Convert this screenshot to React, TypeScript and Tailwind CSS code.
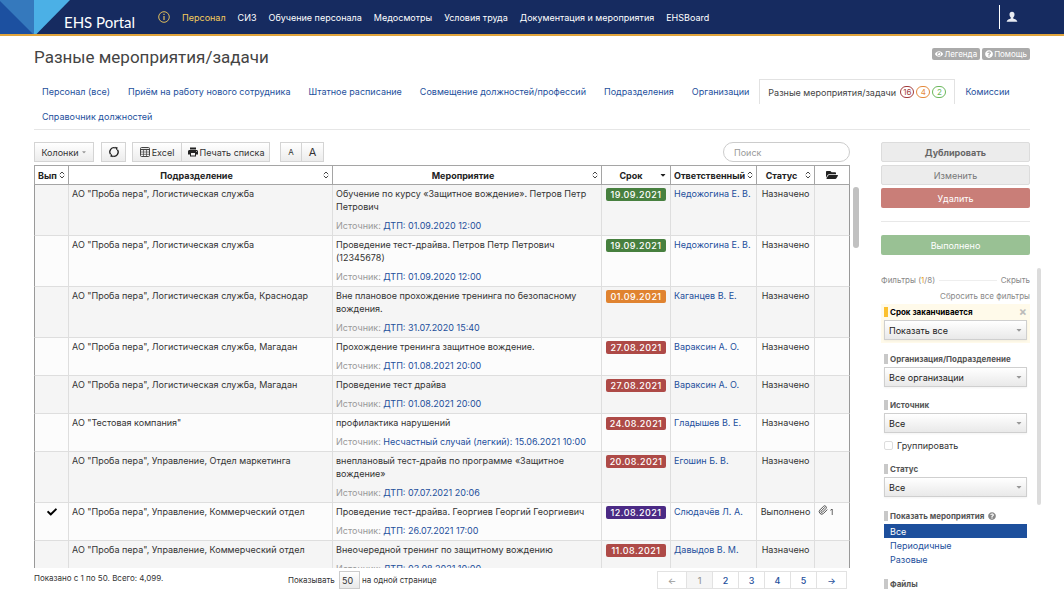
import type { ReactNode } from 'react';
import { Paperclip } from 'lucide-react';
import { FaCheck, FaEye, FaFolderOpen, FaQuestionCircle, FaCaretDown } from 'react-icons/fa';
import { MdPrint } from 'react-icons/md';

const NAV = ['СИЗ', 'Обучение персонала', 'Медосмотры', 'Условия труда', 'Документация и мероприятия', 'EHSBoard'];

const TABS_BEFORE = [
  'Персонал (все)',
  'Приём на работу нового сотрудника',
  'Штатное расписание',
  'Совмещение должностей/профессий',
  'Подразделения',
  'Организации',
];
const TABS_AFTER = ['Комиссии', 'Справочник должностей'];

type Row = {
  done?: boolean;
  unit: string;
  event: string;
  source: string;
  date: string;
  tone: 'green' | 'orange' | 'red' | 'purple';
  person: string;
  status: string;
  files?: number;
};

const ROWS: Row[] = [
  { unit: 'АО "Проба пера", Логистическая служба', event: 'Обучение по курсу «Защитное вождение». Петров Петр Петрович', source: 'ДТП: 01.09.2020 12:00', date: '19.09.2021', tone: 'green', person: 'Недожогина Е. В.', status: 'Назначено' },
  { unit: 'АО "Проба пера", Логистическая служба', event: 'Проведение тест-драйва. Петров Петр Петрович (12345678)', source: 'ДТП: 01.09.2020 12:00', date: '19.09.2021', tone: 'green', person: 'Недожогина Е. В.', status: 'Назначено' },
  { unit: 'АО "Проба пера", Логистическая служба, Краснодар', event: 'Вне плановое прохождение тренинга по безопасному вождения.', source: 'ДТП: 31.07.2020 15:40', date: '01.09.2021', tone: 'orange', person: 'Каганцев В. Е.', status: 'Назначено' },
  { unit: 'АО "Проба пера", Логистическая служба, Магадан', event: 'Прохождение тренинга защитное вождение.', source: 'ДТП: 01.08.2021 20:00', date: '27.08.2021', tone: 'red', person: 'Вараксин А. О.', status: 'Назначено' },
  { unit: 'АО "Проба пера", Логистическая служба, Магадан', event: 'Проведение тест драйва', source: 'ДТП: 01.08.2021 20:00', date: '27.08.2021', tone: 'red', person: 'Вараксин А. О.', status: 'Назначено' },
  { unit: 'АО "Тестовая компания"', event: 'профилактика нарушений', source: 'Несчастный случай (легкий): 15.06.2021 10:00', date: '24.08.2021', tone: 'red', person: 'Гладышев В. Е.', status: 'Назначено' },
  { unit: 'АО "Проба пера", Управление, Отдел маркетинга', event: 'внеплановый тест-драйв по программе «Защитное вождение»', source: 'ДТП: 07.07.2021 20:06', date: '20.08.2021', tone: 'red', person: 'Егошин Б. В.', status: 'Назначено' },
  { done: true, unit: 'АО "Проба пера", Управление, Коммерческий отдел', event: 'Проведение тест-драйва. Георгиев Георгий Георгиевич', source: 'ДТП: 26.07.2021 17:00', date: '12.08.2021', tone: 'purple', person: 'Слюдачёв Л. А.', status: 'Выполнено', files: 1 },
  { unit: 'АО "Проба пера", Управление, Коммерческий отдел', event: 'Внеочередной тренинг по защитному вождению', source: 'ДТП: 03.08.2021 10:00', date: '11.08.2021', tone: 'red', person: 'Давыдов В. М.', status: 'Назначено' },
];

const TONES = {
  green: 'bg-[#47803f]',
  orange: 'bg-[#e08330]',
  red: 'bg-[#ae4a47]',
  purple: 'bg-[#4b2a85]',
};

function Logo() {
  return (
    <svg viewBox="0 0 70 34" className="h-[34px] w-[70px] shrink-0" aria-hidden="true">
      <path d="M0 0H34.5V34H0Z" fill="#3579bd" />
      <path d="M0 1L33 34H0Z" fill="#1c50a0" />
      <path d="M34 0H70L36.5 34H34Z" fill="#4bb0e6" />
    </svg>
  );
}

function SortIcon() {
  return (
    <svg viewBox="0 0 6 8" className="h-2 w-1.5 shrink-0" fill="none" stroke="#333" strokeWidth="0.9" aria-hidden="true">
      <path d="M0.8 3.2L3 1L5.2 3.2M0.8 4.8L3 7L5.2 4.8" strokeLinejoin="round" />
    </svg>
  );
}

function RefreshIcon() {
  return (
    <svg viewBox="0 0 12 12" className="size-3" aria-hidden="true">
      <path d="M2.6 8.4A4.2 4.2 0 0 1 7.4 2M9.4 3.6A4.2 4.2 0 0 1 4.6 10" fill="none" stroke="#222" strokeWidth="1.3" />
      <path d="M6.8 0.7L9.8 1.6L8.6 4.2ZM5.2 11.3L2.2 10.4L3.4 7.8Z" fill="#222" />
    </svg>
  );
}

function SheetIcon() {
  return (
    <svg viewBox="0 0 10 10" className="size-2.5" fill="none" stroke="#444" aria-hidden="true">
      <rect x="0.5" y="0.5" width="9" height="9" rx="1" />
      <path d="M0.5 2.5H9.5" strokeWidth="1.2" />
      <path d="M0.5 5H9.5M0.5 7.3H9.5M3.5 3V9.5M6.5 3V9.5" strokeWidth="0.7" />
    </svg>
  );
}

const toolButton =
  'flex h-5 items-center justify-center border border-[#d4d4d4] bg-linear-to-b from-white to-[#ececec] text-[9px] text-[#333]';

function Th({ children, sort = true, desc = false }: { children: ReactNode; sort?: boolean; desc?: boolean }) {
  return (
    <th className="sticky top-0 h-5 border-y border-r border-[#a5a5a5] bg-white p-0 font-bold first:border-l">
      <div className="flex items-center gap-0.5 px-[3px]">
        <span className="min-w-0 flex-1 overflow-hidden text-center whitespace-nowrap">{children}</span>
        {sort && !desc && <SortIcon />}
        {desc && <FaCaretDown className="size-2 shrink-0" />}
      </div>
    </th>
  );
}

function SelectBox({ id, value }: { id: string; value: string }) {
  return (
    <div className="relative">
      <select
        id={id}
        defaultValue={value}
        className="h-5 w-full appearance-none border border-[#cfcfcf] bg-linear-to-b from-white to-[#e9e9e9] pl-1 text-[9px] text-[#222] shadow-xs"
      >
        <option>{value}</option>
      </select>
      <FaCaretDown className="pointer-events-none absolute top-1.5 right-1 size-2 text-[#999]" />
    </div>
  );
}

function FilterLabel({ htmlFor, children, active = false }: { htmlFor: string; children: ReactNode; active?: boolean }) {
  return (
    <label
      htmlFor={htmlFor}
      className={
        active
          ? 'flex h-4 items-center text-[8px] font-bold whitespace-nowrap text-black'
          : 'flex h-4 items-center text-[8px] font-bold whitespace-nowrap text-[#555]'
      }
    >
      <span className={active ? 'mr-0.5 h-2.5 w-1 bg-[#fbc02d]' : 'mr-0.5 h-2.5 w-1 bg-[#c8c8c8]'} />
      {children}
    </label>
  );
}

function Header() {
  return (
    <header className="flex h-9 shrink-0 border-b-2 border-[#e0a43c] bg-[#162b60] text-white">
      <Logo />
      <a href="#home" className="-ml-1.5 pt-3 text-[15px] leading-5 whitespace-nowrap font-['Lato',sans-serif]">
        EHS Portal
      </a>
      <nav className="ml-[23px] flex h-[34px] flex-1 items-center gap-3 whitespace-nowrap">
        <a href="#info" aria-label="Информация" className="text-[#f5cd5b]">
          <svg viewBox="0 0 12 12" className="size-3" fill="none" stroke="currentColor">
            <circle cx="6" cy="6" r="5.3" strokeWidth="0.9" />
            <path d="M6 5V9M6 2.8V4" strokeWidth="1.1" />
          </svg>
        </a>
        <a href="#staff" className="text-[#f5cd5b]">Персонал</a>
        {NAV.map((item) => (
          <a key={item} href="#section">{item}</a>
        ))}
      </nav>
      <div className="mr-[46px] flex h-[34px] items-center">
        <div className="mr-1.5 h-6 w-px bg-white" />
        <button type="button" aria-label="Профиль">
          <svg viewBox="0 0 12 12" className="size-3" fill="#e8ebf2">
            <path d="M6 0.8C7.6 0.8 8.5 1.9 8.5 3.5C8.5 4.8 7.9 5.9 7.2 6.5V7.5C8.8 8 11 8.6 11.4 10.8H0.6C1 8.6 3.2 8 4.8 7.5V6.5C4.1 5.9 3.5 4.8 3.5 3.5C3.5 1.9 4.4 0.8 6 0.8Z" />
          </svg>
        </button>
      </div>
    </header>
  );
}

function Tabs() {
  return (
    <nav className="flex flex-wrap gap-x-0.5 border-b border-[#e6e6e6] whitespace-nowrap">
      {TABS_BEFORE.map((t) => (
        <a key={t} href="#tab" className="flex h-[25px] items-center px-2 text-[#1d4f9c]">{t}</a>
      ))}
      <a href="#tasks" aria-current="page" className="flex h-[25px] items-center gap-0.5 border-x border-t border-[#e2e2e2] px-2 text-[#444]">
        Разные мероприятия/задачи
        <span className="ml-0.5 flex h-3 items-center rounded-full border border-[#a23b3b] px-0.5 text-[8px] text-[#a23b3b]">16</span>
        <span className="flex h-3 w-[14px] items-center justify-center rounded-full border border-[#e58a3c] text-[8px] text-[#e58a3c]">4</span>
        <span className="flex h-3 w-[14px] items-center justify-center rounded-full border border-[#6cb85c] text-[8px] text-[#6cb85c]">2</span>
      </a>
      {TABS_AFTER.map((t) => (
        <a key={t} href="#tab" className="flex h-[25px] items-center px-2 text-[#1d4f9c]">{t}</a>
      ))}
    </nav>
  );
}

function Toolbar() {
  return (
    <div className="flex h-5 shrink-0 items-center whitespace-nowrap">
      <button type="button" className={`${toolButton} w-[60px] gap-0.5`}>
        Колонки <FaCaretDown className="size-1.5 text-[#999]" />
      </button>
      <button type="button" aria-label="Обновить" className={`${toolButton} ml-[7px] w-[25px]`}>
        <RefreshIcon />
      </button>
      <button type="button" className={`${toolButton} ml-1.5 w-[50px] gap-0.5`}>
        <SheetIcon /> Excel
      </button>
      <button type="button" className={`${toolButton} w-[88px] gap-px border-l-0`}>
        <MdPrint className="size-3 text-[#222]" /> Печать списка
      </button>
      <button type="button" aria-label="Мельче" className={`${toolButton} ml-2.5 w-[22px]`}>
        <span className="text-[8px]">A</span>
      </button>
      <button type="button" aria-label="Крупнее" className={`${toolButton} w-[22px] border-l-0`}>
        <span className="text-[11px]">A</span>
      </button>
      <input
        type="search"
        aria-label="Поиск"
        placeholder="Поиск"
        className="ml-auto h-5 w-[127px] rounded-full border border-[#ccc] px-2.5 placeholder:text-[#999]"
      />
    </div>
  );
}

const td = 'border-r border-b border-[#dedede] px-[3px] pt-0.5 pb-[3px] first:border-l first:border-l-[#999] last:border-r-[#999]';

function TaskTable() {
  return (
    <div className="relative mt-[3px] min-h-0 flex-1">
      <div className="h-full overflow-y-auto [scrollbar-width:none]">
        <table className="w-full table-fixed border-separate border-spacing-0 leading-[13px]">
          <colgroup>
            <col className="w-[35px]" />
            <col className="w-[264px]" />
            <col />
            <col className="w-[69px]" />
            <col className="w-[86px]" />
            <col className="w-[58px]" />
            <col className="w-[35px]" />
          </colgroup>
          <thead className="text-[#222]">
            <tr>
              <Th>Выполнено</Th>
              <Th>Подразделение</Th>
              <Th>Мероприятие</Th>
              <Th desc>Срок</Th>
              <Th>Ответственный</Th>
              <Th>Статус</Th>
              <Th sort={false}>
                <FaFolderOpen className="mx-auto size-3" aria-label="Файлы" />
              </Th>
            </tr>
          </thead>
          <tbody>
            {ROWS.map((r, i) => (
              <tr key={i} className="align-top odd:bg-[#f5f5f5] even:bg-[#fcfcfc]">
                <td className={td}>{r.done && <FaCheck className="mx-auto mt-0.5 size-2.5 text-black" />}</td>
                <td className={td}>{r.unit}</td>
                <td className={td}>
                  <p>{r.event}</p>
                  <p className="mt-1.5 whitespace-nowrap text-[#999]">
                    Источник: <a href="#source" className="text-[#1d4f9c]">{r.source}</a>
                  </p>
                </td>
                <td className={td}>
                  <span className={`mx-px mt-px block rounded-xs text-center font-medium tracking-wider text-white ${TONES[r.tone]}`}>{r.date}</span>
                </td>
                <td className={`${td} whitespace-nowrap`}>
                  <a href="#person" className="text-[#1d4f9c]">{r.person}</a>
                </td>
                <td className={`${td} text-center`}>{r.status}</td>
                <td className={td}>
                  {r.files && (
                    <span className="flex items-center gap-0.5">
                      <Paperclip className="size-2.5 text-[#333]" />
                      <sub className="text-[8px]">{r.files}</sub>
                    </span>
                  )}
                </td>
              </tr>
            ))}
          </tbody>
        </table>
      </div>
      <div className="absolute top-[22px] -right-[9px] h-[61px] w-1.5 rounded-full bg-[#c1c1c1]" />
    </div>
  );
}

const pageCell = 'flex items-center justify-center border-r border-[#e2e2e2]';

function TableFooter() {
  return (
    <div className="mt-[3px] flex h-[18px] shrink-0 items-center text-[8px] whitespace-nowrap">
      <p className="w-[254px] pb-1">Показано с 1 по 50. Всего: 4,099.</p>
      <label htmlFor="per-page" className="w-[51px]">Показывать</label>
      <select
        id="per-page"
        defaultValue="50"
        className="h-[18px] w-[21px] appearance-none border border-[#ccc] bg-linear-to-b from-white to-[#e9e9e9] pl-0.5 text-[9px]"
      >
        <option>50</option>
      </select>
      <span className="ml-0.5">на одной странице</span>
      <nav aria-label="Страницы" className="mr-[3px] ml-auto flex border border-r-0 border-[#e2e2e2] text-[9px] font-medium text-[#1d4f9c] *:h-4">
        <a href="#prev" aria-label="Назад" className={`${pageCell} w-[29px] text-[#999]`}>←</a>
        <a href="#p1" className={`${pageCell} w-[26px] bg-[#f5f5f5] text-[#999]`}>1</a>
        <a href="#p2" className={`${pageCell} w-[26px]`}>2</a>
        <a href="#p3" className={`${pageCell} w-[26px]`}>3</a>
        <a href="#p4" className={`${pageCell} w-[26px]`}>4</a>
        <a href="#p5" className={`${pageCell} w-[26px]`}>5</a>
        <a href="#next" aria-label="Вперёд" className={`${pageCell} w-[30px]`}>→</a>
      </nav>
    </div>
  );
}

function Sidebar() {
  return (
    <aside className="flex w-[149px] shrink-0 flex-col">
      <div className="flex flex-col gap-[3px]">
        <button type="button" className="h-5 rounded-xs border border-[#dcdcdc] bg-[#ececec] font-bold text-[#666]">Дублировать</button>
        <button type="button" className="h-5 rounded-xs border border-[#dcdcdc] bg-[#ececec] text-[#777]">Изменить</button>
        <button type="button" className="h-5 rounded-xs bg-[#c97e78] text-white">Удалить</button>
      </div>
      <hr className="mt-[13px] border-[#e8e8e8]" />
      <button type="button" className="mt-[13px] h-5 shrink-0 rounded-xs bg-[#99c194] text-white">Выполнено</button>
      <div className="relative mt-[13px] min-h-0 flex-1">
        <div className="h-full overflow-y-auto [scrollbar-width:none]">
          <div className="mt-1 flex h-4 items-center gap-1 text-[8px] text-[#888]">
            <span>Фильтры (<span className="text-[#e8a01c]">1</span>/8)</span>
            <span className="h-px flex-1 bg-[#eee]" />
            <button type="button">Скрыть</button>
          </div>
          <button type="button" className="ml-auto block h-4 text-[8px] text-[#888]">Сбросить все фильтры</button>
          <div className="bg-[#fffaea] px-[3px] pb-[3px]">
            <div className="flex items-center justify-between">
              <FilterLabel htmlFor="due" active>Срок заканчивается</FilterLabel>
              <button type="button" aria-label="Сбросить" className="text-[12px] leading-3 font-bold text-[#bbb]">×</button>
            </div>
            <SelectBox id="due" value="Показать все" />
          </div>
          <div className="px-[3px] pt-2">
            <FilterLabel htmlFor="org">Организация/Подразделение</FilterLabel>
            <SelectBox id="org" value="Все организации" />
            <div className="h-2.5" />
            <FilterLabel htmlFor="src">Источник</FilterLabel>
            <SelectBox id="src" value="Все" />
            <label className="mt-1 flex h-4 items-center gap-1">
              <input type="checkbox" className="size-[9px] appearance-none rounded-xs border border-[#ddd] bg-white" />
              Группировать
            </label>
            <div className="h-2" />
            <FilterLabel htmlFor="status">Статус</FilterLabel>
            <SelectBox id="status" value="Все" />
            <div className="h-[11px]" />
            <FilterLabel htmlFor="kind">
              Показать мероприятия <FaQuestionCircle className="ml-1 size-2 text-[#888]" />
            </FilterLabel>
            <div id="kind" className="flex flex-col text-[#1d4f9c]">
              <button type="button" className="h-3.5 bg-[#1d4f9c] pl-1.5 text-left text-white">Все</button>
              <button type="button" className="h-3.5 pl-1.5 text-left">Периодичные</button>
              <button type="button" className="h-3.5 pl-1.5 text-left">Разовые</button>
            </div>
            <div className="h-2.5" />
            <FilterLabel htmlFor="files">Файлы</FilterLabel>
            <SelectBox id="files" value="Все" />
          </div>
        </div>
        <div className="absolute top-0 -right-[11px] h-[237px] w-1 rounded-full bg-[#dcdcdc]" />
      </div>
    </aside>
  );
}

export default function App() {
  return (
    <div className="flex h-screen flex-col bg-white text-[9px] leading-[13px] text-[#333] font-['Inter','Liberation_Sans',sans-serif]">
      <Header />
      <main className="flex min-h-0 flex-1 flex-col px-[34px] pb-[5px]">
        <div className="flex h-[43px] shrink-0 items-start justify-between">
          <h1 className="pt-2.5 text-[17px] leading-[22px] text-[#444] font-['Roboto',sans-serif]">Разные мероприятия/задачи</h1>
          <div className="flex gap-0.5 pt-3 text-[8px] text-white">
            <button type="button" className="flex h-3 items-center gap-px rounded-xs bg-[#aaa] px-[3px]">
              <FaEye className="size-2" /> Легенда
            </button>
            <button type="button" className="flex h-3 items-center gap-px rounded-xs bg-[#aaa] px-[3px]">
              <FaQuestionCircle className="size-2" /> Помощь
            </button>
          </div>
        </div>
        <Tabs />
        <div className="mt-3 flex min-h-0 flex-1 gap-[31px]">
          <section className="flex min-w-0 flex-1 flex-col">
            <Toolbar />
            <TaskTable />
            <TableFooter />
          </section>
          <Sidebar />
        </div>
      </main>
    </div>
  );
}
